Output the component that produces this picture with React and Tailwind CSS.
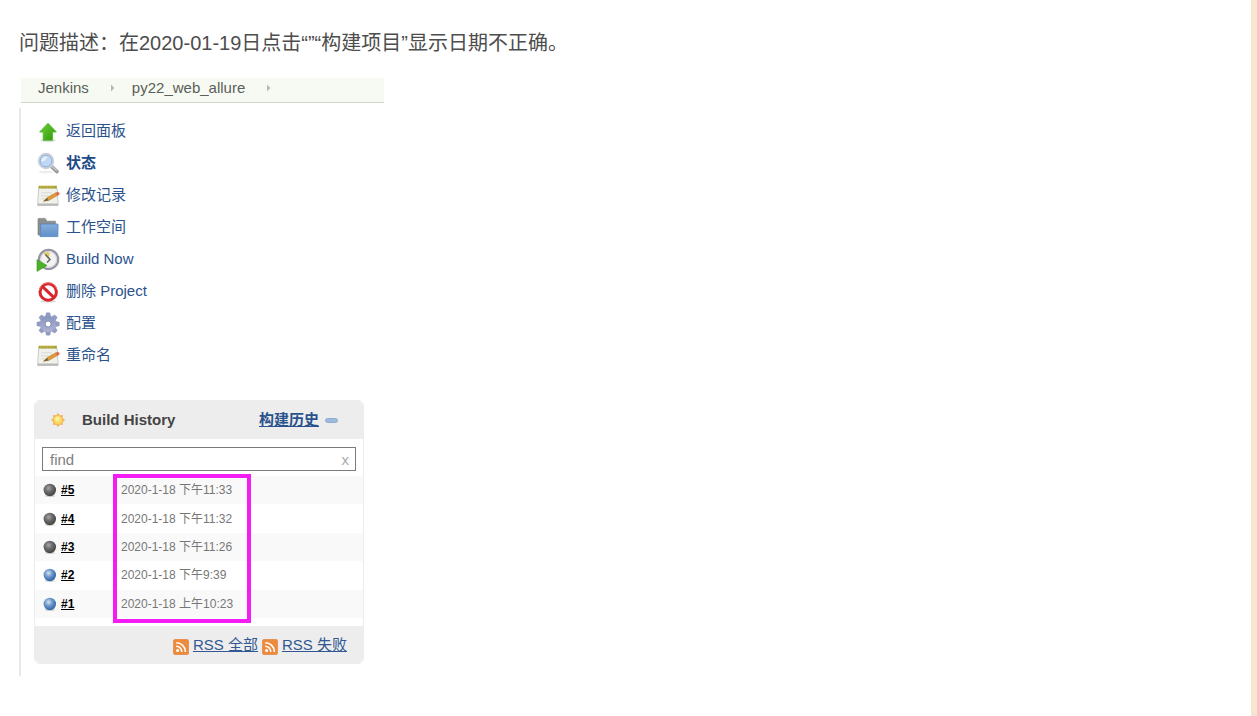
import React from "react";

function ArrowUpIcon() {
  return (
    <svg viewBox="0 0 24 24" className="size-6 shrink-0" aria-hidden="true">
      <defs>
        <linearGradient id="up" x1="0" y1="0" x2="1" y2="1">
          <stop offset="0" stopColor="#6fd03c" />
          <stop offset="1" stopColor="#2c9a06" />
        </linearGradient>
      </defs>
      <ellipse cx="12" cy="20.6" rx="8" ry="1.6" fill="#000" opacity=".12" />
      <path d="M12 3.2 20.4 12H16.6V20.3H7.2V12H3.6Z" fill="url(#up)" stroke="#4fb32a" strokeWidth=".8" strokeLinejoin="round" />
    </svg>
  );
}

function SearchIcon() {
  return (
    <svg viewBox="0 0 24 24" className="size-6 shrink-0" aria-hidden="true">
      <ellipse cx="10" cy="20" rx="7.5" ry="1.4" fill="#000" opacity=".07" />
      <path d="M15.8 14.6 21 19.6" stroke="#96999d" strokeWidth="3.6" strokeLinecap="round" />
      <path d="M16 14.2 20.4 18.4" stroke="#cfd1d3" strokeWidth="1.2" strokeLinecap="round" />
      <circle cx="10" cy="9" r="7.3" fill="#c3d9f3" stroke="#cdd0d4" strokeWidth="1.8" />
      <circle cx="10" cy="9" r="5.9" fill="#c0d8f5" stroke="#86a9da" strokeWidth=".9" />
      <path d="M5.2 9.6C5 6.2 8 4.2 11.4 4.4 10.6 7.6 8.4 9.2 5.2 9.6Z" fill="#e6f0fb" />
    </svg>
  );
}

function NotepadIcon() {
  return (
    <svg viewBox="0 0 24 24" className="size-6 shrink-0" aria-hidden="true">
      <path d="M2.8 4H21L22.2 21.2H1.6Z" fill="#f1f1ee" stroke="#c4c4c0" strokeWidth=".9" />
      <path d="M1.8 19.6H22V21.8H1.6Z" fill="#b9b9b6" />
      <path d="M2.6 1.8H20.8V4.4H2.6Z" fill="#a8a02e" />
      <path d="M5 1.6V3.6M8 1.6V3.6M11 1.6V3.6M14 1.6V3.6M17 1.6V3.6" stroke="#cfc868" strokeWidth="1" />
      <path d="M5 8.8H16M5 11.8H12M5 14.8H9" stroke="#d6d6d2" strokeWidth=".9" />
      <path d="M8.4 17.2 11 13.6 19.6 8.8 21.6 11.4 12.8 16.4Z" fill="#dd9c3c" stroke="#b67c30" strokeWidth=".5" />
      <path d="M19.2 9 21.6 7.8Q24 8.4 23.6 10.4L21.2 11.8Z" fill="#e06b50" />
      <path d="M6.8 17.6 11 13.8 12.4 16.6Z" fill="#7a6340" />
    </svg>
  );
}

function FolderIcon() {
  return (
    <svg viewBox="0 0 24 24" className="size-6 shrink-0" aria-hidden="true">
      <defs>
        <linearGradient id="folder" x1="0" y1="0" x2="0" y2="1">
          <stop offset="0" stopColor="#86afdc" />
          <stop offset="1" stopColor="#5f90c8" />
        </linearGradient>
      </defs>
      <path d="M2 3.2Q2 2.4 3 2.4H9.2L10.8 5.2H19.4V19H2Z" fill="#8d8e8e" stroke="#767777" strokeWidth=".6" />
      <path d="M4.8 8H21.6Q22.2 8 22.1 8.8L21.8 20.6H4Z" fill="url(#folder)" stroke="#5584bd" strokeWidth=".8" />
    </svg>
  );
}

function ClockIcon() {
  return (
    <svg viewBox="0 0 24 24" className="size-6 shrink-0" aria-hidden="true">
      <circle cx="12.6" cy="11.4" r="9.6" fill="#f3f3ef" stroke="#9494a4" strokeWidth="2.2" />
      <circle cx="12.6" cy="11.4" r="7.9" fill="none" stroke="#d3d3da" strokeWidth="1" />
      <path d="M12.6 11.4 7.4 5.4Q10.6 2.8 13.8 5Z" fill="#e0cc66" />
      <path d="M9.4 6.4 14 11.4 11 14.6" fill="none" stroke="#66666c" strokeWidth="1.5" />
      <path d="M1 11.6 11 17.4 1 23.4Z" fill="#4bb128" stroke="#39981a" strokeWidth=".6" />
    </svg>
  );
}

function ForbiddenIcon() {
  return (
    <svg viewBox="0 0 24 24" className="size-6 shrink-0" aria-hidden="true">
      <ellipse cx="12.2" cy="21.4" rx="8" ry="1.2" fill="#000" opacity=".15" />
      <circle cx="12.2" cy="12" r="8.2" fill="#fff" stroke="#d9262b" strokeWidth="3" />
      <path d="M6.8 6.8 17.8 17.4" stroke="#d9262b" strokeWidth="3" />
      <path d="M3.4 10A9 9 0 0 1 20.8 9" fill="none" stroke="#ef8584" strokeWidth=".9" />
    </svg>
  );
}

function GearIcon() {
  return (
    <svg viewBox="0 0 24 24" className="size-6 shrink-0" aria-hidden="true">
      <defs>
        <linearGradient id="gear" gradientUnits="userSpaceOnUse" x1="12" y1="1" x2="12" y2="23">
          <stop offset="0" stopColor="#7c90bd" />
          <stop offset="1" stopColor="#b9b7d3" />
        </linearGradient>
      </defs>
      <g fill="#919dc3" stroke="#8790b4" strokeWidth=".4">
        {[0, 45, 90, 135, 180, 225, 270, 315].map((a) => (
          <path key={a} d="M9 6 10.4.8H13.8L15.2 6Z" transform={`rotate(${a} 12.1 12)`} />
        ))}
      </g>
      <circle cx="12.1" cy="12" r="8" fill="url(#gear)" />
      <circle cx="12.1" cy="12" r="3" fill="#fff" stroke="#7f89af" strokeWidth=".9" />
    </svg>
  );
}

function SunIcon() {
  return (
    <svg viewBox="0 0 16 16" className="size-4 shrink-0" aria-hidden="true">
      <g fill="#f4b163">
        {[0, 45, 90, 135, 180, 225, 270, 315].map((a) => (
          <path key={a} d="M5.8 4 8 .8 10.2 4Z" transform={`rotate(${a} 8 8)`} />
        ))}
      </g>
      <circle cx="8" cy="8" r="4.7" fill="#fbd95c" stroke="#f1b356" strokeWidth=".7" />
      <circle cx="7.4" cy="7" r="2.4" fill="#fdeea0" />
    </svg>
  );
}

function RssIcon() {
  return (
    <svg viewBox="0 0 16 16" className="mt-1 size-4 shrink-0" aria-hidden="true">
      <rect x=".3" y=".3" width="15.4" height="15.4" rx="2.2" fill="#ec8b3c" stroke="#e0803f" strokeWidth=".6" />
      <circle cx="4.6" cy="11.6" r="1.5" fill="#fff" />
      <path d="M3.2 7.3A5.6 5.6 0 0 1 8.8 12.9M3.2 3.7A9.2 9.2 0 0 1 12.4 12.9" fill="none" stroke="#fff" strokeWidth="1.6" />
    </svg>
  );
}

function Ball({ blue }) {
  const id = blue ? "ball-blue" : "ball-grey";
  return (
    <svg viewBox="0 0 14 14" className="size-3.5 shrink-0" role="img" aria-label={blue ? "Success" : "Aborted"}>
      <defs>
        <radialGradient id={id} cx=".4" cy=".35" r=".62">
          <stop offset="0" stopColor={blue ? "#d6e3ee" : "#a6a6a6"} />
          <stop offset=".5" stopColor={blue ? "#6c98ca" : "#6a6a6a"} />
          <stop offset="1" stopColor={blue ? "#3767a8" : "#474747"} />
        </radialGradient>
      </defs>
      <ellipse cx="7" cy="13" rx="5" ry="1" fill="#000" opacity=".15" />
      <circle cx="6.8" cy="7" r="6.2" fill={`url(#${id})`} />
    </svg>
  );
}

function Crumb({ children }) {
  return (
    <li className="flex items-center">
      <a href="#" className="text-[#5b5e5a]">{children}</a>
      <svg viewBox="0 0 5 8" className="mr-4 ml-5 h-2 w-[7px]" aria-hidden="true">
        <path d="M1 0.5 4.4 4 1 7.5Z" fill="#b5b8b3" />
      </svg>
    </li>
  );
}

const tasks = [
  { label: "返回面板", Icon: ArrowUpIcon },
  { label: "状态", Icon: SearchIcon, current: true },
  { label: "修改记录", Icon: NotepadIcon },
  { label: "工作空间", Icon: FolderIcon },
  { label: "Build Now", Icon: ClockIcon },
  { label: "删除 Project", Icon: ForbiddenIcon },
  { label: "配置", Icon: GearIcon },
  { label: "重命名", Icon: NotepadIcon },
];

const builds = [
  { id: "#5", date: "2020-1-18 下午11:33", blue: false },
  { id: "#4", date: "2020-1-18 下午11:32", blue: false },
  { id: "#3", date: "2020-1-18 下午11:26", blue: false },
  { id: "#2", date: "2020-1-18 下午9:39", blue: true },
  { id: "#1", date: "2020-1-18 上午10:23", blue: true },
];

function BuildHistory() {
  return (
    <section className="mr-5 ml-[13px] overflow-hidden rounded-md border border-[#ececec]">
      <header className="flex h-[38px] items-center bg-[#ededed] pr-6 pl-[15px]">
        <SunIcon />
        <h2 className="ml-4 grow font-bold text-[#444]">Build History</h2>
        <a href="#" className="font-bold text-[#2a528c] underline">构建历史</a>
        <button type="button" aria-label="Collapse" className="ml-1 flex h-4 w-4 items-center justify-center">
          <span className="h-[5px] w-[13px] rounded-sm border border-[#8fadd3] bg-[#9dbadd]" />
        </button>
      </header>
      <form className="mx-[7px] mt-2 mb-[5px] flex h-6 items-center border border-[#7b7b7b] bg-white pt-0.5">
        <input
          type="text"
          aria-label="find"
          placeholder="find"
          className="min-w-0 grow px-[7px] text-[#808080] outline-none placeholder:text-[#808080]"
        />
        <button type="button" aria-label="Clear" className="px-1.5 text-[#a9a9a9]">x</button>
      </form>
      <div className="relative">
        <table className="h-[142px] w-full text-xs">
          <tbody>
            {builds.map((b) => (
              <tr key={b.id} className="odd:bg-[#f9f9f9]">
                <td className="w-[86px] p-0">
                  <div className="flex items-center gap-1 pl-2">
                    <Ball blue={b.blue} />
                    <a href="#" className="font-bold text-black underline">{b.id}</a>
                  </div>
                </td>
                <td className="p-0 text-[#777]">{b.date}</td>
              </tr>
            ))}
          </tbody>
        </table>
        <div className="pointer-events-none absolute -top-0.5 left-[78px] h-[149px] w-[138px] border-4 border-[#f41cf4]" />
      </div>
      <footer className="mt-2 flex h-[37px] items-center justify-end gap-1 bg-[#ededed] pr-4 text-[#315892]">
        <RssIcon />
        <a href="#" className="underline">RSS 全部</a>
        <RssIcon />
        <a href="#" className="underline">RSS 失败</a>
      </footer>
    </section>
  );
}

export default function App() {
  return (
    <div className="flex min-h-screen bg-[#f4e6cf] pr-1.5 font-['Liberation_Sans','Noto_Sans_CJK_SC',sans-serif]">
      <main className="grow bg-white pt-[29px] pl-[19px]">
        <p className="text-xl leading-7 text-[#4d4d4d]">
          问题描述：在2020-01-19日点击“”“构建项目”显示日期不正确。
        </p>
        <div className="mt-[21px] w-[365px] text-[15px] leading-5">
          <nav aria-label="Breadcrumb" className="ml-0.5 h-[25px] border-b border-[#d3d6cf] bg-[#f6faf2]">
            <ol className="flex pl-[17px]">
              <Crumb>Jenkins</Crumb>
              <Crumb>py22_web_allure</Crumb>
            </ol>
          </nav>
          <div className="mt-[5px] border-l-2 border-[#e8e8e8] pt-2 pb-3">
            <ul className="pb-7 pl-[15px]">
              {tasks.map(({ label, Icon, current }) => (
                <li key={label} className="flex h-8 items-center">
                  <a href="#" className={current ? "flex items-center gap-1.5 font-bold text-[#204a87]" : "flex items-center gap-1.5 text-[#2a528c]"}>
                    <Icon />
                    <span className="pb-0.5">{label}</span>
                  </a>
                </li>
              ))}
            </ul>
            <BuildHistory />
          </div>
        </div>
      </main>
    </div>
  );
}
